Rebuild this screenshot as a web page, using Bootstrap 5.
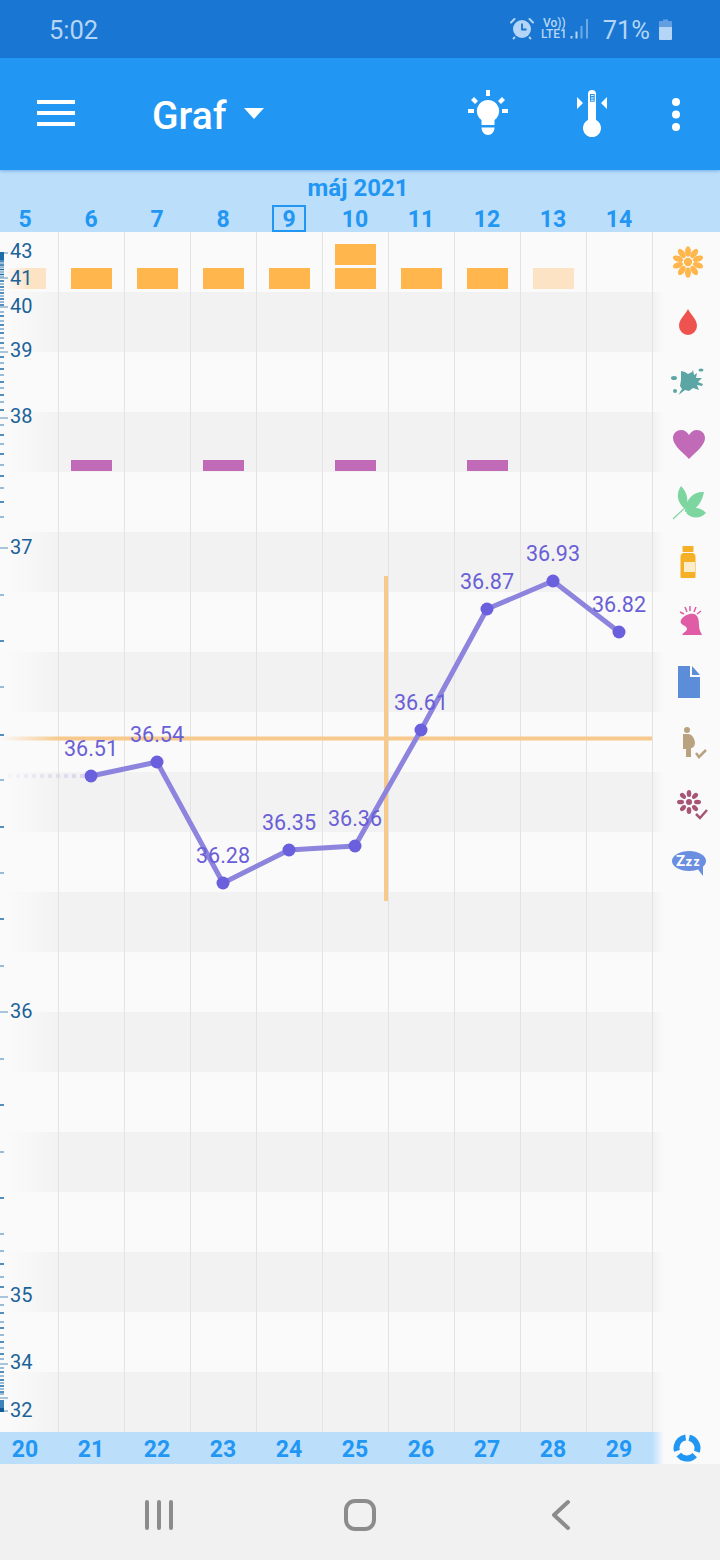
<!DOCTYPE html>
<html lang="sk">
<head>
<meta charset="utf-8">
<title>Graf</title>
<link href="https://cdn.jsdelivr.net/npm/bootstrap@5.3.0/dist/css/bootstrap.min.css" rel="stylesheet">
<style>
html,body{margin:0;width:720px;height:1560px;overflow:hidden;background:#fafafa;font-family:Roboto,"Liberation Sans",sans-serif}
svg{display:block}
.statusbar{height:58px;background:#1976d2;color:#b4d5f5;padding-left:49px;padding-right:48px}
.stime{font-size:25.5px;line-height:1;margin-top:4px}
.spct{font-size:25.5px;line-height:1;margin-left:14px;margin-right:9px;margin-top:4px}
.ltesvg{margin-left:7px}
.appbar{height:112px;background:#2196f3;color:#fff;position:relative;z-index:2;box-shadow:0 1px 3px rgba(25,118,210,.45)}
.menuicon{margin-left:37px;margin-top:-2px}
.apptitle{font-size:39px;font-weight:500;line-height:1;margin-left:77px;margin-top:4px}
.caret-ico{margin-left:18px;margin-top:-1px}
.bulbicon{margin-left:auto;margin-top:-2px}
.thermo{margin-left:68px}
.dots{margin-left:64px;margin-right:40px}
.datehead{height:62px;background:#bbdefb;color:#2196f3;font-weight:700;font-size:23px;line-height:1}
.monthrow{height:35px;width:716px;text-align:center;padding-top:6px;font-size:24px}
.dayrow{height:27px;margin-left:-8px}
.daycell{width:66px;text-align:center;height:27px;line-height:30px}
.daybox{width:34px;height:27px;border:2px solid #2196f3;margin:0 auto;line-height:26px}
.chartrow{height:1200px}
.chartsvg{flex:0 0 664px}
.iconcol{flex:0 0 56px;padding-right:8px}
.iconcell{height:60px}
.footrow{height:32px}
.footdays{flex:0 0 664px;height:32px;color:#2196f3;font-weight:700;font-size:23px;line-height:36px;background:linear-gradient(90deg,#bbdefb 652px,#fafafa 664px)}
.footcell{width:66px;text-align:center}
.footcell:first-child{margin-left:-8px}
.footicon{flex:0 0 56px;padding-right:10px}
.navrow{height:96px;background:#f1f1f1;padding-top:6px}
.navcell{width:201px}
.tlabel{font-family:Roboto,"Liberation Sans",sans-serif;font-size:20px;fill:#1b6299}
.dlabel{font-family:Roboto,"Liberation Sans",sans-serif;font-size:21.5px;fill:#6a5fd6;text-anchor:middle}
</style>
</head>
<body>
<div class="statusbar d-flex align-items-center">
  <span class="stime">5:02</span>
  <div class="d-flex align-items-center ms-auto">
    <svg width="24" height="24" viewBox="-12 -12 24 24"><circle r="9" fill="#b4d5f5"/><path d="M0-5.500V0.500H4.500" fill="none" stroke="#1976d2" stroke-width="1.800"/><path d="M-11-6.500-7.500-10M11-6.500 7.500-10" stroke="#b4d5f5" stroke-width="2" stroke-linecap="round"/><path d="M-7 8-9 10M7 8 9 10" stroke="#b4d5f5" stroke-width="1.800"/></svg>
    <svg width="48" height="24" viewBox="0 0 48 24" class="ltesvg"><text x="2" y="10" font-family="Roboto" font-size="12" font-weight="500" fill="#b4d5f5">Vo))</text><text x="0" y="21" font-family="Roboto" font-size="12" font-weight="500" fill="#b4d5f5">LTE1</text><rect x="29.500" y="19" width="2" height="2.500" fill="#b4d5f5"/><rect x="34.500" y="14.500" width="2" height="7" fill="#b4d5f5"/><rect x="39.500" y="9" width="2" height="12.500" fill="#6fa9e4"/><rect x="45" y="2" width="2" height="19.500" fill="#6fa9e4"/></svg>
    <span class="spct">71%</span>
    <svg width="13" height="21" viewBox="0 0 13 21"><path d="M4 2V0.500H9V2H12A1 1 0 0 1 13 3V8H0V3A1 1 0 0 1 1 2Z" fill="#639fe0"/><path d="M0 8H13V20A1 1 0 0 1 12 21H1A1 1 0 0 1 0 20Z" fill="#b4d5f5"/></svg>
  </div>
</div>

<nav class="appbar d-flex align-items-center">
  <svg class="menuicon" width="38" height="26" viewBox="0 0 38 26"><path d="M0 0h38v4H0zM0 11h38v4H0zM0 22h38v4H0z" fill="#fff"/></svg>
  <span class="apptitle">Graf</span>
  <svg class="caret-ico" width="20" height="11" viewBox="0 0 20 11"><path d="M0 0H20L10 11Z" fill="#fff"/></svg>
  <svg class="bulbicon" width="40" height="46" viewBox="-20 -22 40 46"><path d="M0-12A11 11 0 0 1 6.500 8V13H-6.500V8A11 11 0 0 1 0-12Z" fill="#fff"/><path d="M-6.500 15.500H6.500C6.500 20 3.500 23 0 23S-6.500 20-6.500 15.500Z" fill="#fff"/><path d="M-2-22H2V-16H-2ZM14-15 17-12 13-8 10-11ZM-14-15-17-12-13-8-10-11ZM14-3H20V1H14ZM-14-3H-20V1H-14Z" fill="#fff"/></svg>
  <svg class="thermo" width="32" height="48" viewBox="-16 -24 32 48"><path d="M-4-20A4 4 0 0 1 4-20V6A9 9 0 1 1-4 6Z" fill="#fff"/><path d="M-2-20H2.700V-12.300H-2Z" fill="#2196f3"/><path d="M-1-18.500H1.700M-1-16H1.700M-1-13.800H1.700" stroke="#fff" stroke-width="1"/><path d="M-15-17-9-11-15-5ZM15-17 9-11 15-5Z" fill="#fff"/></svg>
  <svg class="dots" width="8" height="33" viewBox="0 0 8 33"><circle cx="4" cy="4" r="4" fill="#fff"/><circle cx="4" cy="16.500" r="4" fill="#fff"/><circle cx="4" cy="29" r="4" fill="#fff"/></svg>
</nav>

<div class="datehead">
  <div class="monthrow">máj 2021</div>
  <div class="dayrow d-flex">
    <div class="daycell">5</div><div class="daycell">6</div><div class="daycell">7</div><div class="daycell">8</div>
    <div class="daycell"><div class="daybox">9</div></div>
    <div class="daycell">10</div><div class="daycell">11</div><div class="daycell">12</div><div class="daycell">13</div><div class="daycell">14</div>
  </div>
</div>

<div class="chartrow d-flex">
  <svg class="chartsvg" width="664" height="1200" viewBox="0 232 664 1200">
    <defs>
      <linearGradient id="fadeL"><stop offset="0.12" stop-color="#fafafa"/><stop offset="1" stop-color="#fafafa" stop-opacity="0"/></linearGradient>
      <linearGradient id="fadeR"><stop offset="0" stop-color="#fafafa" stop-opacity="0"/><stop offset="1" stop-color="#fafafa"/></linearGradient>
      <linearGradient id="fadeO" gradientUnits="userSpaceOnUse" x1="0" x2="60" y1="0" y2="0"><stop offset="0" stop-color="#f7c98c" stop-opacity="0"/><stop offset="1" stop-color="#f7c98c"/></linearGradient>
      <linearGradient id="fadeP"><stop offset="0" stop-color="#fbe3c3" stop-opacity="0"/><stop offset="0.6" stop-color="#fbe3c3"/></linearGradient>
      <linearGradient id="fadeD" gradientUnits="userSpaceOnUse" x1="5" x2="84" y1="0" y2="0"><stop offset="0" stop-color="#d9d6ee" stop-opacity="0.1"/><stop offset="1" stop-color="#d9d6ee"/></linearGradient>
    </defs>
    <rect y="232" width="664" height="1200" fill="#fafafa"/>
    <g fill="#f2f2f2">
      <rect y="292" width="664" height="60"/><rect y="412" width="664" height="60"/><rect y="532" width="664" height="60"/><rect y="652" width="664" height="60"/><rect y="772" width="664" height="60"/><rect y="892" width="664" height="60"/><rect y="1012" width="664" height="60"/><rect y="1132" width="664" height="60"/><rect y="1252" width="664" height="60"/><rect y="1372" width="664" height="60"/>
    </g>
    <rect y="232" width="60" height="1200" fill="url(#fadeL)"/>
    <rect x="652" y="232" width="12" height="1200" fill="url(#fadeR)"/>
    <path d="M58.500 232V1432M124.500 232V1432M190.500 232V1432M256.500 232V1432M322.500 232V1432M388.500 232V1432M454.500 232V1432M520.500 232V1432M586.500 232V1432M652.500 232V1432" stroke="#e3e3e3" stroke-width="1" fill="none"/>

    <g fill="#ffb74d">
      <rect x="335" y="244" width="41" height="21"/>
      <rect x="71" y="268" width="41" height="21"/><rect x="137" y="268" width="41" height="21"/><rect x="203" y="268" width="41" height="21"/><rect x="269" y="268" width="41" height="21"/><rect x="335" y="268" width="41" height="21"/><rect x="401" y="268" width="41" height="21"/><rect x="467" y="268" width="41" height="21"/>
    </g>
    <rect x="533" y="268" width="41" height="21" fill="#fbe3c3"/>
    <rect x="5" y="268" width="41" height="21" fill="url(#fadeP)"/>
    <g fill="#c06ab8">
      <rect x="71" y="460" width="41" height="11"/><rect x="203" y="460" width="41" height="11"/><rect x="335" y="460" width="41" height="11"/><rect x="467" y="460" width="41" height="11"/>
    </g>

    <path d="M0 253H8M0 278H8M0 307H8M0 352H8M0 418H8M0 548H8M0 1012H8M0 1297H8M0 1364H8M0 1398H8M0 1411H8" stroke="#8fb4d2" stroke-width="1.500"/>
    <path d="M0 261H4M0 265H4M0 269.500H4M0 274.500H4M0 281H4M0 287H4M0 293H4M0 299H4M0 305H4M0 316H4M0 325H4M0 333H4M0 343H4M0 357H4M0 369H4M0 382H4M0 395H4M0 410H4M0 435H4M0 454H4M0 476H4M0 502H4M0 641H4M0 735H4M0 827H4M0 919H4M0 1105H4M0 1198H4M0 1264H4M0 1287H4M0 1313H4M0 1328H4M0 1342H4M0 1354H4M0 1372H4M0 1380H4M0 1386H4M0 1392H4" stroke="#1c6aa6" stroke-width="1.500"/>
    <path d="M0 263H4M0 267H4M0 272H4M0 277H4M0 284H4M0 290H4M0 296H4M0 302H4M0 312H4M0 321H4M0 329H4M0 338H4M0 348H4M0 363H4M0 375H4M0 388H4M0 402H4M0 425H4M0 444H4M0 465H4M0 488H4M0 517H4M0 595H4M0 687H4M0 780H4M0 873H4M0 966H4M0 1059H4M0 1152H4M0 1234H4M0 1251H4M0 1277H4M0 1305H4M0 1322H4M0 1335H4M0 1348H4M0 1359H4M0 1368H4M0 1376H4M0 1383H4M0 1389H4M0 1394H4" stroke="#7ba8cc" stroke-width="1.500"/>
    <rect y="252" width="4" height="8" fill="#1c6aa6"/>
    <rect y="1400" width="4" height="11" fill="#3d82b8"/>
    <rect y="1408" width="4" height="4" fill="#115a96"/>

    <text class="tlabel" x="10" y="258">43</text>
    <text class="tlabel" x="10" y="285">41</text>
    <text class="tlabel" x="10" y="313">40</text>
    <text class="tlabel" x="10" y="357">39</text>
    <text class="tlabel" x="10" y="423">38</text>
    <text class="tlabel" x="10" y="554">37</text>
    <text class="tlabel" x="10" y="1018">36</text>
    <text class="tlabel" x="10" y="1302">35</text>
    <text class="tlabel" x="10" y="1369">34</text>
    <text class="tlabel" x="10" y="1417">32</text>

    <rect x="0" y="736.500" width="652" height="4" fill="url(#fadeO)"/>
    <rect x="384" y="576" width="4" height="325" fill="#f7c98c"/>

    <path d="M8 776H84" stroke="url(#fadeD)" stroke-width="4" stroke-dasharray="4 4" fill="none"/>
    <path d="M91 776 157 762 223 883 289 850 355 846 421 730 487 609 553 581 619 632" fill="none" stroke="#8d84de" stroke-width="5" stroke-linejoin="round"/>
    <g fill="#6a5fdc">
      <circle cx="91" cy="776" r="6.500"/><circle cx="157" cy="762" r="6.500"/><circle cx="223" cy="883" r="6.500"/><circle cx="289" cy="850" r="6.500"/><circle cx="355" cy="846" r="6.500"/><circle cx="421" cy="730" r="6.500"/><circle cx="487" cy="609" r="6.500"/><circle cx="553" cy="581" r="6.500"/><circle cx="619" cy="632" r="6.500"/>
    </g>
    <text class="dlabel" x="91" y="756">36.51</text>
    <text class="dlabel" x="157" y="742">36.54</text>
    <text class="dlabel" x="223" y="863">36.28</text>
    <text class="dlabel" x="289" y="830">36.35</text>
    <text class="dlabel" x="355" y="826">36.36</text>
    <text class="dlabel" x="421" y="710">36.61</text>
    <text class="dlabel" x="487" y="589">36.87</text>
    <text class="dlabel" x="553" y="561">36.93</text>
    <text class="dlabel" x="619" y="612">36.82</text>
  </svg>

  <div class="iconcol d-flex flex-column align-items-center">
    <div class="iconcell d-flex align-items-center justify-content-center">
      <svg width="40" height="40" viewBox="-20 -20 40 40"><g fill="#ffb74d"><circle r="4.200"/><ellipse cy="-10.500" rx="3" ry="5.300"/><ellipse cy="-10.500" rx="3" ry="5.300" transform="rotate(36)"/><ellipse cy="-10.500" rx="3" ry="5.300" transform="rotate(72)"/><ellipse cy="-10.500" rx="3" ry="5.300" transform="rotate(108)"/><ellipse cy="-10.500" rx="3" ry="5.300" transform="rotate(144)"/><ellipse cy="-10.500" rx="3" ry="5.300" transform="rotate(180)"/><ellipse cy="-10.500" rx="3" ry="5.300" transform="rotate(216)"/><ellipse cy="-10.500" rx="3" ry="5.300" transform="rotate(252)"/><ellipse cy="-10.500" rx="3" ry="5.300" transform="rotate(288)"/><ellipse cy="-10.500" rx="3" ry="5.300" transform="rotate(324)"/></g></svg>
    </div>
    <div class="iconcell d-flex align-items-center justify-content-center">
      <svg width="40" height="40" viewBox="-20 -20 40 40"><path d="M0-13C3-7 9-3 9 4A9 9 0 0 1-9 4C-9-3-3-7 0-13Z" fill="#ef5350"/></svg>
    </div>
    <div class="iconcell d-flex align-items-center justify-content-center">
      <svg width="40" height="40" viewBox="-20 -20 40 40"><g fill="#5ba5a5"><path d="M-7-11-3-10 0-8 4-10 5-12 6-7 9-9 8-4 14-4 10 0 15 2 14 4 9 3 11 8 5 6 1 9-3 8-7 11-9 13-8 10-6 7-8 4-7-2Z"/><ellipse cx="-14" cy="-4" rx="3" ry="2"/><circle cx="-13" cy="9" r="2"/><ellipse cx="13" cy="-12" rx="2.500" ry="1.500"/></g></svg>
    </div>
    <div class="iconcell d-flex align-items-center justify-content-center">
      <svg width="40" height="40" viewBox="-20 -20 40 40"><path d="M1 17C-7 9-15 3-15-4-15-9-11-12-7-12-3-12-1-10 1-7 3-10 5-12 9-12 13-12 17-9 17-4 17 3 9 9 1 17Z" fill="#c06ab8"/></svg>
    </div>
    <div class="iconcell d-flex align-items-center justify-content-center">
      <svg width="40" height="40" viewBox="-20 -20 40 40"><g fill="#7dd6a0"><path d="M-7-16C-13-7-10 1-3 7 1 0 0-9-7-16Z"/><path d="M16-10C6-11-3-3-3 10 8 10 14 0 16-10Z"/><path d="M18 11C12 5 4 4-2 11 4 17 12 17 18 11Z"/></g><path d="M-15 17 0 3" stroke="#7dd6a0" stroke-width="1.200"/></svg>
    </div>
    <div class="iconcell d-flex align-items-center justify-content-center">
      <svg width="40" height="40" viewBox="-20 -20 40 40"><rect x="-5.500" y="-16" width="11" height="6" rx="1" fill="#f5b025"/><path d="M-5-9H5C7-8 7.500-7 7.500-5V15A1 1 0 0 1 6.500 16H-6.500A1 1 0 0 1-7.500 15V-5C-7.500-7-7-8-5-9Z" fill="#f5b025"/><rect x="-4" y="0" width="11" height="10" fill="#fbeccb"/></svg>
    </div>
    <div class="iconcell d-flex align-items-center justify-content-center">
      <svg width="40" height="40" viewBox="-22 -20 40 40"><path d="M-9-2C-6-7 0-9 4-8 8-7 9-2 9 3 9 7 10 9 12 13L-8 13C-6 10-3 9-3 7-3 5-5 4-7 3-9 2-10 0-9-2Z" fill="#e05ca5"/><path d="M-10-10-6-8M-5-15-3-10M0-16 0-11M6-15 4-10M11-11 7-8" stroke="#e05ca5" stroke-width="1.500"/></svg>
    </div>
    <div class="iconcell d-flex align-items-center justify-content-center">
      <svg width="40" height="40" viewBox="-20 -20 40 40"><path d="M-10-16H2V-5H12V16H-10Z" fill="#5b8dd9"/><path d="M4-16 12-7H4Z" fill="#5b8dd9"/></svg>
    </div>
    <div class="iconcell d-flex align-items-center justify-content-center">
      <svg width="40" height="40" viewBox="-20 -20 40 40"><circle cx="-1" cy="-12" r="3" fill="#b9a27f"/><path d="M-5-8H0C4-8 7-3 7 1 7 4 5 6 3 6V15H-2V7H-5Z" fill="#b9a27f"/><path d="M8 11 11 15 18 8" fill="none" stroke="#b9a27f" stroke-width="2.500"/></svg>
    </div>
    <div class="iconcell d-flex align-items-center justify-content-center">
      <svg width="40" height="40" viewBox="-20 -20 40 40"><g fill="#a85575"><circle cx="1" r="3"/><ellipse cx="1" cy="-8.500" rx="2.300" ry="3.500"/><ellipse cx="1" cy="-8.500" rx="2.300" ry="3.500" transform="rotate(45 1 0)"/><ellipse cx="1" cy="-8.500" rx="2.300" ry="3.500" transform="rotate(90 1 0)"/><ellipse cx="1" cy="-8.500" rx="2.300" ry="3.500" transform="rotate(135 1 0)"/><ellipse cx="1" cy="-8.500" rx="2.300" ry="3.500" transform="rotate(180 1 0)"/><ellipse cx="1" cy="-8.500" rx="2.300" ry="3.500" transform="rotate(225 1 0)"/><ellipse cx="1" cy="-8.500" rx="2.300" ry="3.500" transform="rotate(270 1 0)"/><ellipse cx="1" cy="-8.500" rx="2.300" ry="3.500" transform="rotate(315 1 0)"/></g><path d="M8 12 12 16 19 8" fill="none" stroke="#a85575" stroke-width="2.500"/></svg>
    </div>
    <div class="iconcell d-flex align-items-center justify-content-center">
      <svg width="40" height="40" viewBox="-20 -20 40 40"><ellipse cx="1" cy="-1" rx="17" ry="10" fill="#6a8ee0"/><path d="M9 6 15 14 15 4Z" fill="#6a8ee0"/><text x="-12" y="4" font-family="Roboto" font-weight="700" font-size="15" fill="#fff">Z</text><text x="-2.500" y="4" font-family="Roboto" font-weight="700" font-size="13" fill="#fff">z</text><text x="5.500" y="3.500" font-family="Roboto" font-weight="700" font-size="12" fill="#fff">z</text></svg>
    </div>
  </div>
</div>

<div class="footrow d-flex">
  <div class="footdays d-flex">
    <div class="footcell">20</div><div class="footcell">21</div><div class="footcell">22</div><div class="footcell">23</div><div class="footcell">24</div><div class="footcell">25</div><div class="footcell">26</div><div class="footcell">27</div><div class="footcell">28</div><div class="footcell">29</div>
  </div>
  <div class="footicon d-flex align-items-center justify-content-center">
    <svg width="32" height="32" viewBox="-16 -16 32 32"><circle r="10.500" fill="none" stroke="#2196f3" stroke-width="6" stroke-dasharray="18 4" transform="rotate(-78)"/></svg>
  </div>
</div>

<div class="navrow d-flex align-items-center justify-content-center">
  <div class="navcell d-flex justify-content-center">
    <svg width="30" height="32" viewBox="0 0 30 32"><path d="M3 3V29M15 3V29M27 3V29" stroke="#8c8c8c" stroke-width="4" stroke-linecap="round"/></svg>
  </div>
  <div class="navcell d-flex justify-content-center">
    <svg width="34" height="34" viewBox="0 0 34 34"><rect x="3" y="3" width="28" height="28" rx="9" fill="none" stroke="#8c8c8c" stroke-width="4"/></svg>
  </div>
  <div class="navcell d-flex justify-content-center">
    <svg width="20" height="32" viewBox="0 0 20 32"><path d="M17 3 3 16 17 29" fill="none" stroke="#8c8c8c" stroke-width="4" stroke-linecap="round" stroke-linejoin="round"/></svg>
  </div>
</div>

<script src="https://cdn.jsdelivr.net/npm/bootstrap@5.3.0/dist/js/bootstrap.bundle.min.js"></script>
</body>
</html>
